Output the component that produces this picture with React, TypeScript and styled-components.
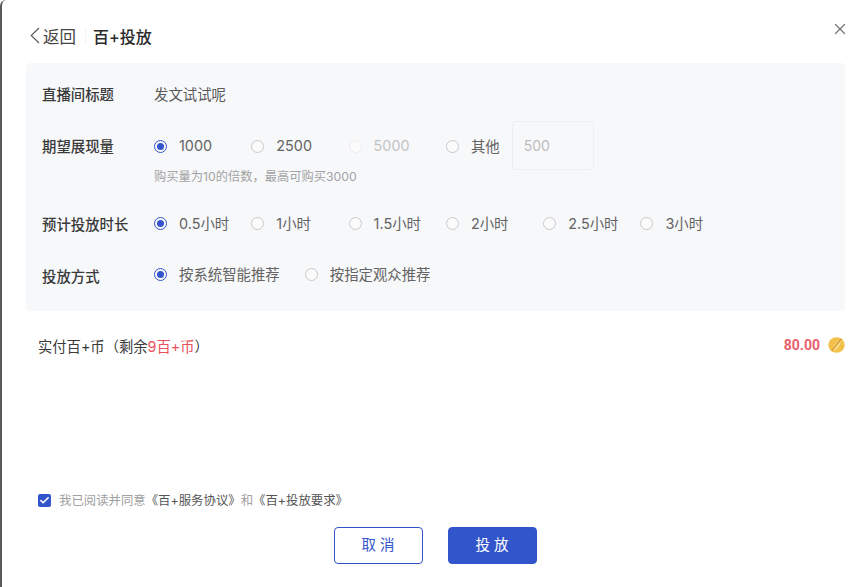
import React from "react";
import styled, { createGlobalStyle } from "styled-components";
import { Check, X } from "lucide-react";

const Global = createGlobalStyle`
  html, body { margin: 0; padding: 0; background: #fff; overflow: hidden; }
  body { font-family: "Inter", "Noto Sans CJK SC", sans-serif; }
`;

const Dialog = styled.div`
  position: relative; width: 849px; height: 587px; box-sizing: border-box;
  padding: 0 4px 23px 24px; display: flex; flex-direction: column;
  background: #fff; border-left: 2px solid #5a5a5a; border-top-left-radius: 6px;
`;

const Header = styled.div`
  height: 63px; display: flex; align-items: center; padding: 8px 0 0 4px; box-sizing: border-box;
`;

const Back = styled.div`
  display: flex; align-items: center; gap: 3px; color: #444; font-size: 16.5px;
`;

const Divider = styled.div`
  width: 1px; height: 16px; margin: 0 7px 0 9px; background: #f4f4f4;
`;

const Title = styled.div`
  font-size: 16px; font-weight: 500; color: #2b2b2b;
`;

const CloseBtn = styled.div`
  position: absolute; top: 20px; right: 0; color: #777; display: flex;
`;

const Panel = styled.div`
  height: 248px; box-sizing: border-box; background: #f7f8fa; border-radius: 4px;
  padding: 0 16px; display: flex; flex-direction: column;
`;

const Row = styled.div<{ $height: number; $top?: number }>`
  display: flex; align-items: center; height: ${p => p.$height}px; flex-shrink: 0;
  margin-top: ${p => p.$top || 0}px;
`;

const Label = styled.div<{ $drop?: number }>`
  width: 112px; flex-shrink: 0; font-size: 14.4px; color: #3a3a3a; font-weight: 500;
  padding-top: ${p => p.$drop || 0}px;
`;

const Value = styled.div`
  font-size: 14.4px; color: #5a5a5a;
`;

const Option = styled.div<{ $disabled?: boolean; $wide?: boolean; $auto?: boolean }>`
  display: flex; align-items: center; box-sizing: border-box; height: 20px;
  min-width: ${p => (p.$auto ? 0 : 97.3)}px; padding-right: ${p => (p.$wide ? 25 : 0)}px;
  margin-right: ${p => (p.$auto ? 13 : 0)}px;
  font-size: 14.4px; color: ${p => (p.$disabled ? "#c4c4c4" : "#636363")};
`;

const Radio = styled.span<{ $checked?: boolean; $disabled?: boolean }>`
  width: 13px; height: 13px; box-sizing: border-box; border-radius: 50%; flex-shrink: 0;
  margin: 2px 12px 0 0; background: #fbfbfc; position: relative;
  border: 1px solid ${p => (p.$checked ? "#3355cc" : p.$disabled ? "#ececee" : "#c9c9c9")};
  &::after {
    content: ""; display: ${p => (p.$checked ? "block" : "none")};
    position: absolute; inset: 2px; border-radius: 50%; background: #3355cc;
  }
`;

const OtherInput = styled.div`
  width: 82px; height: 49px; box-sizing: border-box; margin-left: -1px; padding-left: 11px;
  display: flex; align-items: center; font-size: 14px; color: #bdbdbd;
  border: 1px solid #eeeff1; border-radius: 3px;
`;

const Hint = styled.div`
  font-size: 12.25px; color: #a3a3a3; margin: 6px 0 0 112px; height: 14px; line-height: 14px;
`;

const PayRow = styled.div`
  display: flex; align-items: center; justify-content: space-between;
  height: 68px; padding-left: 12px;
`;

const PayLabel = styled.div`
  font-size: 14.3px; color: #3a3a3a;
`;

const Red = styled.span`
  color: #e8505b;
`;

const Amount = styled.div`
  display: flex; align-items: center; gap: 8px;
  font-family: "Roboto", sans-serif; font-size: 14px; font-weight: 700; color: #e8606b;
`;

const Agreement = styled.div`
  margin-top: auto; display: flex; align-items: center; padding-left: 12px;
  font-size: 12.4px; color: #a0a0a0; height: 18px; margin-bottom: 18px;
`;

const CheckBox = styled.span`
  width: 13px; height: 13px; border-radius: 2px; background: #3355cc; color: #fff;
  display: flex; align-items: center; justify-content: center; margin-right: 8px;
`;

const Link = styled.span`
  color: #555;
`;

const Footer = styled.div`
  display: flex; justify-content: center; gap: 25px;
`;

const Button = styled.div<{ $primary?: boolean }>`
  width: 89px; height: 37px; box-sizing: border-box; border-radius: 4px; padding: 0 0 4px 3px;
  border: 1px solid #3355cc; display: flex; align-items: center; justify-content: center;
  font-size: 14.5px; letter-spacing: 4px;
  background: ${p => (p.$primary ? "#3355cc" : "#fff")};
  color: ${p => (p.$primary ? "#fff" : "#3355cc")};
`;

const Chevron = () => (
  <svg width="10" height="17" viewBox="0 0 10 17">
    <path d="M9 1 L1.2 8.5 L9 16" stroke="#555" strokeWidth="1.1" fill="none" />
  </svg>
);

const Coin = () => (
  <svg width="17" height="16" viewBox="0 0 17 16">
    <ellipse cx="8.5" cy="8" rx="8.2" ry="7.8" fill="#f2c14a" />
    <path d="M4.5 12.5 C6 8 9 4 13 1.8 C13.5 6 11 11 6.5 13.5 Z" fill="#f8dc85" />
    <path d="M4 13.5 L13 2.2" stroke="#d3922a" strokeWidth="1.2" fill="none" strokeLinecap="round" />
  </svg>
);

const SHOW = [
  { text: "1000", checked: true },
  { text: "2500" },
  { text: "5000", disabled: true },
];
const HOURS = ["0.5小时", "1小时", "1.5小时", "2小时", "2.5小时", "3小时"];

export default function App() {
  return (
    <Dialog>
      <Global />
      <Header>
        <Back><Chevron />返回</Back>
        <Divider />
        <Title>百+投放</Title>
      </Header>
      <CloseBtn><X size={18} strokeWidth={1.7} /></CloseBtn>

      <Panel>
        <Row $height={61}>
          <Label>直播间标题</Label>
          <Value>发文试试呢</Value>
        </Row>
        <Row $height={38} $top={2}>
          <Label>期望展现量</Label>
          {SHOW.map(o => (
            <Option key={o.text} $disabled={o.disabled}>
              <Radio $checked={o.checked} $disabled={o.disabled} />{o.text}
            </Option>
          ))}
          <Option $auto><Radio />其他</Option>
          <OtherInput>500</OtherInput>
        </Row>
        <Hint>购买量为10的倍数，最高可购买3000</Hint>
        <Row $height={60} $top={8}>
          <Label $drop={2}>预计投放时长</Label>
          {HOURS.map((h, i) => (
            <Option key={h}><Radio $checked={i === 0} />{h}</Option>
          ))}
        </Row>
        <Row $height={42}>
          <Label $drop={4}>投放方式</Label>
          <Option $wide><Radio $checked />按系统智能推荐</Option>
          <Option><Radio />按指定观众推荐</Option>
        </Row>
      </Panel>

      <PayRow>
        <PayLabel>实付百+币（剩余<Red>9百+币</Red>）</PayLabel>
        <Amount>80.00<Coin /></Amount>
      </PayRow>

      <Agreement>
        <CheckBox><Check size={11} strokeWidth={3.5} /></CheckBox>
        我已阅读并同意<Link>《百+服务协议》</Link>和<Link>《百+投放要求》</Link>
      </Agreement>
      <Footer>
        <Button>取消</Button>
        <Button $primary>投放</Button>
      </Footer>
    </Dialog>
  );
}
